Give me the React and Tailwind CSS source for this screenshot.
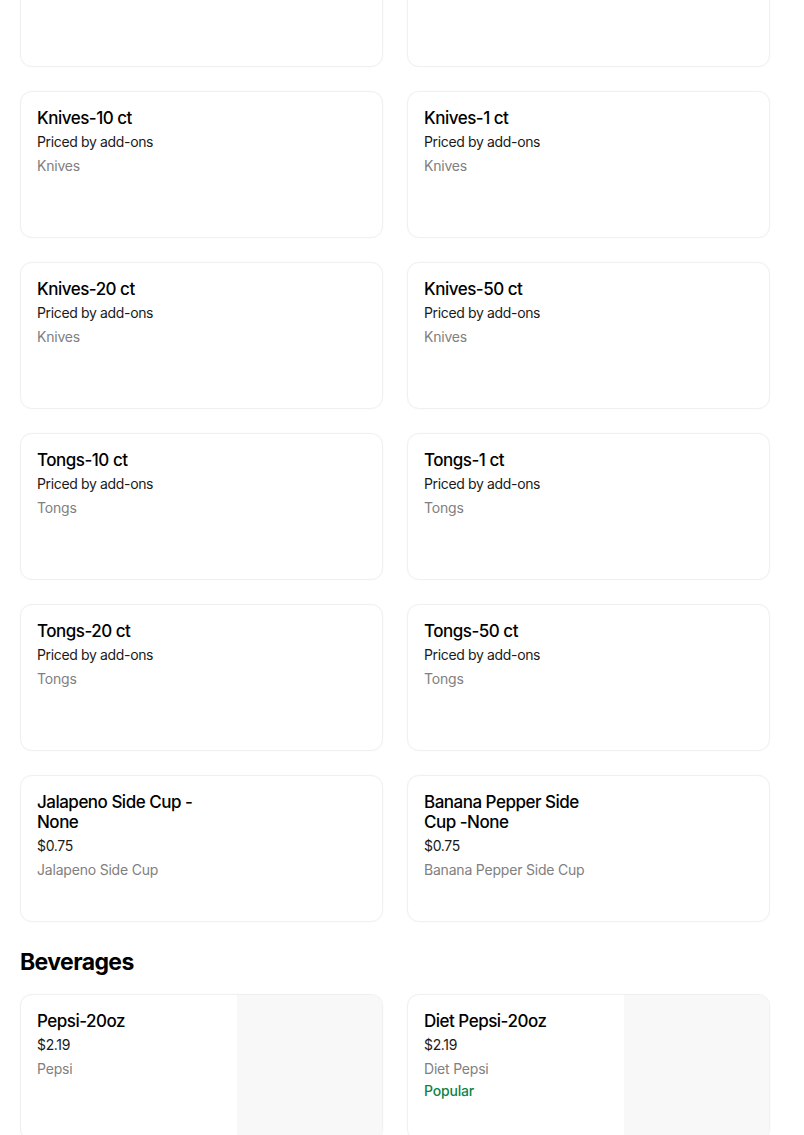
const rows = [
  [
    { title: 'Forks-20 ct', price: 'Priced by add-ons', cat: 'Forks' },
    { title: 'Forks-50 ct', price: 'Priced by add-ons', cat: 'Forks' },
  ],
  [
    { title: 'Knives-10 ct', price: 'Priced by add-ons', cat: 'Knives' },
    { title: 'Knives-1 ct', price: 'Priced by add-ons', cat: 'Knives' },
  ],
  [
    { title: 'Knives-20 ct', price: 'Priced by add-ons', cat: 'Knives' },
    { title: 'Knives-50 ct', price: 'Priced by add-ons', cat: 'Knives' },
  ],
  [
    { title: 'Tongs-10 ct', price: 'Priced by add-ons', cat: 'Tongs' },
    { title: 'Tongs-1 ct', price: 'Priced by add-ons', cat: 'Tongs' },
  ],
  [
    { title: 'Tongs-20 ct', price: 'Priced by add-ons', cat: 'Tongs' },
    { title: 'Tongs-50 ct', price: 'Priced by add-ons', cat: 'Tongs' },
  ],
  [
    { title: 'Jalapeno Side Cup - None', price: '$0.75', cat: 'Jalapeno Side Cup' },
    { title: 'Banana Pepper Side Cup -None', price: '$0.75', cat: 'Banana Pepper Side Cup' },
  ],
];

const beverages = [
  { title: 'Pepsi-20oz', price: '$2.19', cat: 'Pepsi' },
  { title: 'Diet Pepsi-20oz', price: '$2.19', cat: 'Diet Pepsi', popular: true },
];

function ItemCard({ item, image }) {
  return (
    <div className="flex h-[147px] overflow-hidden rounded-[12px] border border-[#f0f0f0] bg-white shadow-[0_0_2px_rgba(0,0,0,0.04)]">
      <div className="flex-1 pl-4 pr-4 pt-4">
        <div className="w-[178px]">
          <div className="text-[17px] font-medium leading-[20px] tracking-[-0.5px] text-black">{item.title}</div>
          <div className="mt-1 text-[14px] leading-[20px] tracking-[-0.35px] text-[#1a1a1a]">{item.price}</div>
          <div className="mt-1 text-[14px] leading-[20px] tracking-[-0.2px] text-[#808080]">{item.cat}</div>
          {item.popular && (
            <div className="mt-[2px] text-[14px] font-medium leading-[20px] tracking-[-0.2px] text-[#0e8345]">Popular</div>
          )}
        </div>
      </div>
      {image && <div className="w-[145px] shrink-0 bg-[#f8f8f8]" />}
    </div>
  );
}

export default function App() {
  return (
    <div
      className="h-[1135px] overflow-hidden bg-white"
      style={{ fontFamily: 'Inter, "Noto Sans", sans-serif' }}
    >
      <div className="mt-[-80px] w-[750px] ml-[20px]">
        <div className="grid grid-cols-2 gap-6">
          {rows.flat().map((item, i) => (
            <ItemCard key={i} item={item} />
          ))}
        </div>
        <h2 className="mt-6 mb-4 text-[23px] font-bold leading-[32px] tracking-[-0.6px] text-black">
          Beverages
        </h2>
        <div className="grid grid-cols-2 gap-6">
          {beverages.map((item, i) => (
            <ItemCard key={i} item={item} image />
          ))}
        </div>
      </div>
    </div>
  );
}
